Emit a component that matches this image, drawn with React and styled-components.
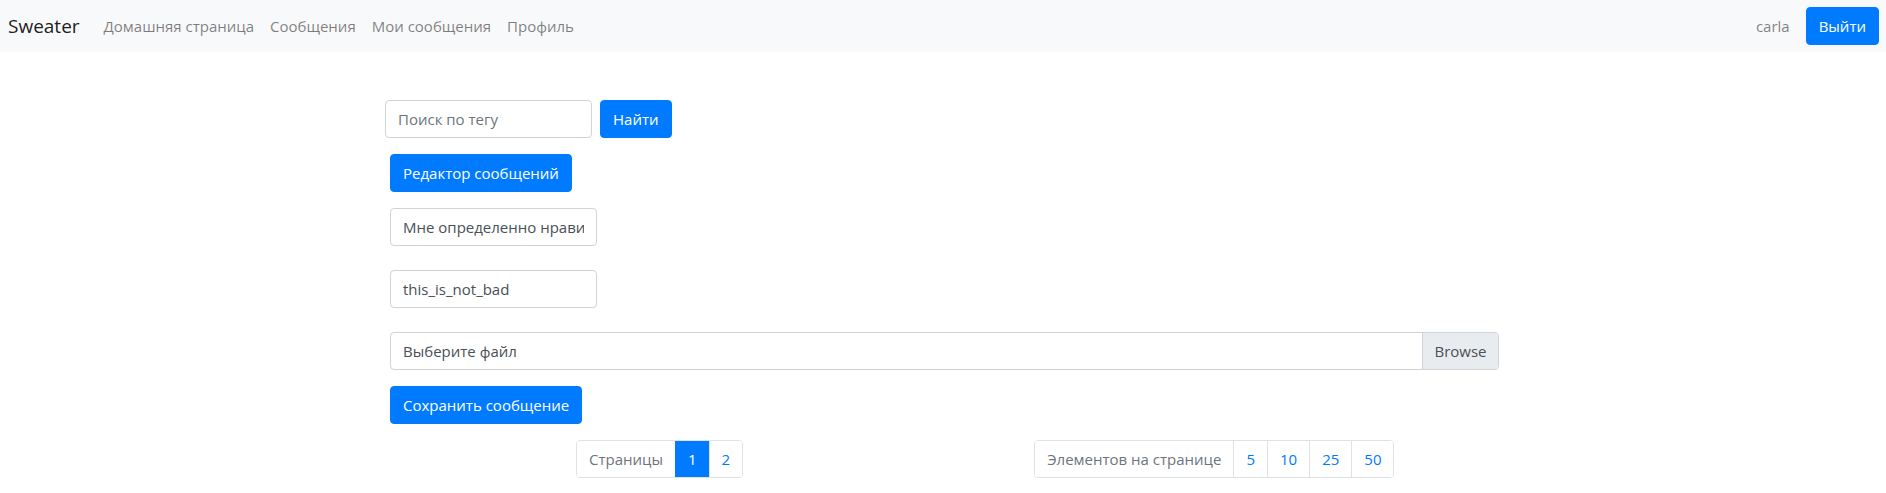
import React from "react";
import styled, { createGlobalStyle } from "styled-components";

const Global = createGlobalStyle`
  * { box-sizing: border-box; }
  html, body { margin: 0; padding: 0; background: #fff; }
  body {
    font-family: "Open Sans", "Noto Sans", sans-serif;
    font-size: 15px;
    line-height: 1.5;
    color: #212529;
  }
`;

const Navbar = styled.nav`
  height: 52px;
  background: #f8f9fa;
  display: flex;
  align-items: center;
  padding: 0 7px 0 8px;
`;

const Brand = styled.span`
  font-size: 19px;
  color: rgba(0, 0, 0, 0.9);
  margin-right: 16px;
`;

const NavList = styled.div`
  display: flex;
  flex: 1;
`;

const NavLink = styled.span`
  color: rgba(0, 0, 0, 0.5);
  padding: 0 8px;
`;

const UserName = styled.span`
  color: rgba(0, 0, 0, 0.5);
  margin-right: 16px;
`;

const Button = styled.button`
  font: inherit;
  height: 38px;
  padding: 0 12px;
  border: 1px solid #007bff;
  background: #007bff;
  color: #fff;
  border-radius: 4px;
  cursor: pointer;
`;

const Container = styled.main`
  width: 1110px;
  margin: 0 auto;
  padding: 48px 0 0 2px;
  display: flex;
  flex-direction: column;
  align-items: flex-start;
`;

const SearchForm = styled.form`
  display: flex;
  gap: 8px;
  margin-left: -5px;
  margin-bottom: 16px;
`;

const Input = styled.input`
  font: inherit;
  width: 207px;
  height: 38px;
  padding: 0 12px;
  border: 1px solid #ced4da;
  border-radius: 4px;
  color: #495057;
  background: #fff;
  &::placeholder { color: #6c757d; }
`;

const FormGroup = styled.div`
  margin-top: ${(p) => p.$top || 0}px;
  width: ${(p) => (p.$full ? "100%" : "auto")};
`;

const FileField = styled.div`
  display: flex;
  width: 1109px;
  height: 38px;
  border: 1px solid #ced4da;
  border-radius: 4px;
  overflow: hidden;
  color: #495057;
`;

const FileLabel = styled.span`
  flex: 1;
  padding: 0 12px;
  display: flex;
  align-items: center;
`;

const BrowseBtn = styled.span`
  width: 76px;
  background: #e9ecef;
  border-left: 1px solid #ced4da;
  display: flex;
  align-items: center;
  justify-content: center;
`;

const PagerRow = styled.div`
  display: flex;
  margin-top: 16px;
`;

const Pager = styled.ul`
  list-style: none;
  margin: 0 0 0 ${(p) => p.$offset}px;
  padding: 0;
  display: flex;
  height: 38px;
  border: 1px solid #dee2e6;
  border-radius: 4px;
  overflow: hidden;
`;

const PageItem = styled.li`
  display: flex;
  align-items: center;
  justify-content: center;
  padding: 0 12px;
  border-left: ${(p) => (p.$first ? "none" : "1px solid #dee2e6")};
  background: ${(p) => (p.$active ? "#007bff" : "#fff")};
  color: ${(p) => (p.$active ? "#fff" : p.$label ? "#6c757d" : "#007bff")};
  ${(p) => p.$active && "border-left-color: #007bff;"}
`;

export default function App() {
  return (
    <>
      <Global />
      <Navbar>
        <Brand>Sweater</Brand>
        <NavList>
          <NavLink>Домашняя страница</NavLink>
          <NavLink>Сообщения</NavLink>
          <NavLink>Мои сообщения</NavLink>
          <NavLink>Профиль</NavLink>
        </NavList>
        <UserName>carla</UserName>
        <Button>Выйти</Button>
      </Navbar>
      <Container>
        <SearchForm>
          <Input placeholder="Поиск по тегу" />
          <Button type="button">Найти</Button>
        </SearchForm>
        <Button>Редактор сообщений</Button>
        <FormGroup $top={16}>
          <Input defaultValue="Мне определенно нравится" />
        </FormGroup>
        <FormGroup $top={24}>
          <Input defaultValue="this_is_not_bad" />
        </FormGroup>
        <FormGroup $top={24} $full>
          <FileField>
            <FileLabel>Выберите файл</FileLabel>
            <BrowseBtn>Browse</BrowseBtn>
          </FileField>
        </FormGroup>
        <FormGroup $top={16}>
          <Button>Сохранить сообщение</Button>
        </FormGroup>
        <PagerRow>
          <Pager $offset={186}>
            <PageItem $first $label>Страницы</PageItem>
            <PageItem $active>1</PageItem>
            <PageItem>2</PageItem>
          </Pager>
          <Pager $offset={291}>
            <PageItem $first $label>Элементов на странице</PageItem>
            <PageItem>5</PageItem>
            <PageItem>10</PageItem>
            <PageItem>25</PageItem>
            <PageItem>50</PageItem>
          </Pager>
        </PagerRow>
      </Container>
    </>
  );
}
